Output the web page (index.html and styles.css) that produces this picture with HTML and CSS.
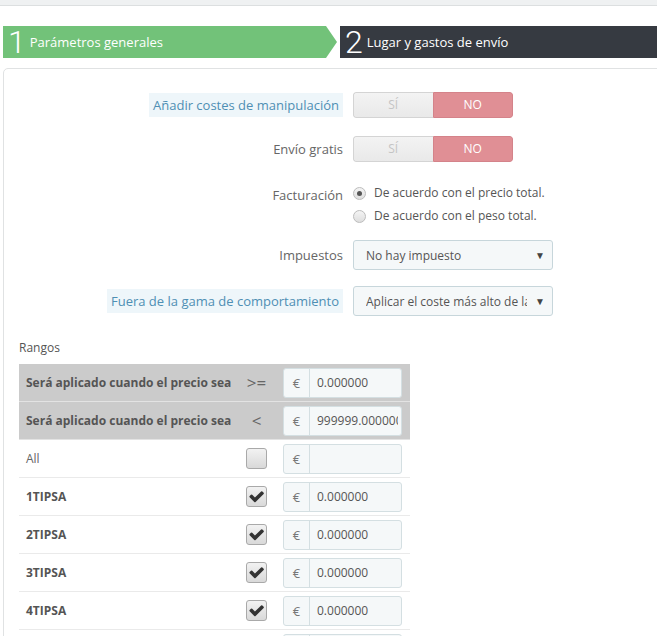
FILE: index.html
```html
<!DOCTYPE html>
<html lang="es">
<head>
  <meta charset="UTF-8">
  <title>Transportista - Asistente</title>
  <link rel="stylesheet" href="styles.css">
</head>
<body>
  <div class="topbar"></div>

  <!-- Wizard steps -->
  <div class="steps">
    <div class="step step-done"><span class="step-num">1</span>Parámetros generales</div>
    <div class="step step-current"><span class="step-num">2</span>Lugar y gastos de envío</div>
  </div>

  <div class="card">
    <div class="form-row first">
      <div class="label-col"><span class="label hint">Añadir costes de manipulación</span></div>
      <div class="switch">
        <span class="switch-opt">SÍ</span>
        <span class="switch-opt active">NO</span>
      </div>
    </div>

    <div class="form-row gap-lg">
      <div class="label-col"><span class="label">Envío gratis</span></div>
      <div class="switch">
        <span class="switch-opt">SÍ</span>
        <span class="switch-opt active">NO</span>
      </div>
    </div>

    <div class="form-row radio-row">
      <div class="label-col"><span class="label">Facturación</span></div>
      <div class="radios">
        <label class="radio"><span class="radio-dot checked"></span>De acuerdo con el precio total.</label>
        <label class="radio"><span class="radio-dot"></span>De acuerdo con el peso total.</label>
      </div>
    </div>

    <div class="form-row gap-md">
      <div class="label-col"><span class="label">Impuestos</span></div>
      <div class="select"><span class="select-text">No hay impuesto</span><span class="caret">&#9660;</span></div>
    </div>

    <div class="form-row">
      <div class="label-col"><span class="label hint">Fuera de la gama de comportamiento</span></div>
      <div class="select"><span class="select-text">Aplicar el coste más alto de la gama definida</span><span class="caret">&#9660;</span></div>
    </div>

    <!-- Ranges -->
    <div class="ranges">
      <div class="ranges-title">Rangos</div>
      <div class="range-table">
        <div class="range-row head">
          <div class="range-label">Será aplicado cuando el precio sea</div>
          <div class="range-mid op">&gt;=</div>
          <div class="input-group"><span class="addon">€</span><span class="input">0.000000</span></div>
        </div>
        <div class="range-row head">
          <div class="range-label">Será aplicado cuando el precio sea</div>
          <div class="range-mid op">&lt;</div>
          <div class="input-group"><span class="addon">€</span><span class="input">999999.000000</span></div>
        </div>
        <div class="range-row">
          <div class="range-label plain">All</div>
          <div class="range-mid"><span class="checkbox"></span></div>
          <div class="input-group"><span class="addon">€</span><span class="input"></span></div>
        </div>
        <div class="range-row">
          <div class="range-label">1TIPSA</div>
          <div class="range-mid"><span class="checkbox"><svg class="tick" viewBox="80 390 1600 1140"><path d="M1671 566q0 40-28 68l-724 724-136 136q-28 28-68 28t-68-28l-136-136-362-362q-28-28-28-68t28-68l136-136q28-28 68-28t68 28l294 295 656-657q28-28 68-28t68 28l136 136q28 28 28 68z"/></svg></span></div>
          <div class="input-group"><span class="addon">€</span><span class="input">0.000000</span></div>
        </div>
        <div class="range-row">
          <div class="range-label">2TIPSA</div>
          <div class="range-mid"><span class="checkbox"><svg class="tick" viewBox="80 390 1600 1140"><path d="M1671 566q0 40-28 68l-724 724-136 136q-28 28-68 28t-68-28l-136-136-362-362q-28-28-28-68t28-68l136-136q28-28 68-28t68 28l294 295 656-657q28-28 68-28t68 28l136 136q28 28 28 68z"/></svg></span></div>
          <div class="input-group"><span class="addon">€</span><span class="input">0.000000</span></div>
        </div>
        <div class="range-row">
          <div class="range-label">3TIPSA</div>
          <div class="range-mid"><span class="checkbox"><svg class="tick" viewBox="80 390 1600 1140"><path d="M1671 566q0 40-28 68l-724 724-136 136q-28 28-68 28t-68-28l-136-136-362-362q-28-28-28-68t28-68l136-136q28-28 68-28t68 28l294 295 656-657q28-28 68-28t68 28l136 136q28 28 28 68z"/></svg></span></div>
          <div class="input-group"><span class="addon">€</span><span class="input">0.000000</span></div>
        </div>
        <div class="range-row">
          <div class="range-label">4TIPSA</div>
          <div class="range-mid"><span class="checkbox"><svg class="tick" viewBox="80 390 1600 1140"><path d="M1671 566q0 40-28 68l-724 724-136 136q-28 28-68 28t-68-28l-136-136-362-362q-28-28-28-68t28-68l136-136q28-28 68-28t68 28l294 295 656-657q28-28 68-28t68 28l136 136q28 28 28 68z"/></svg></span></div>
          <div class="input-group"><span class="addon">€</span><span class="input">0.000000</span></div>
        </div>
        <div class="range-row">
          <div class="range-label">5TIPSA</div>
          <div class="range-mid"><span class="checkbox"><svg class="tick" viewBox="80 390 1600 1140"><path d="M1671 566q0 40-28 68l-724 724-136 136q-28 28-68 28t-68-28l-136-136-362-362q-28-28-28-68t28-68l136-136q28-28 68-28t68 28l294 295 656-657q28-28 68-28t68 28l136 136q28 28 28 68z"/></svg></span></div>
          <div class="input-group"><span class="addon">€</span><span class="input">0.000000</span></div>
        </div>
      </div>
    </div>
  </div>
</body>
</html>
```

FILE: styles.css
```css
html, body {
  overflow: hidden;
}
body {
  margin: 0;
  font-family: "Open Sans", Arial, sans-serif;
  font-size: 13px;
  color: #666;
  background: #fff;
}
.topbar {
  height: 5px;
  background: #eff1f2;
  border-bottom: 1px solid #dcdfe0;
}

/* wizard steps */
.steps {
  display: flex;
  margin: 20px 0 0 3px;
  height: 32px;
}
.step {
  display: flex;
  align-items: center;
  color: #fff;
  font-size: 13px;
  white-space: nowrap;
}
.step-num {
  font-family: Roboto, "Open Sans", sans-serif;
  font-weight: 300;
  font-size: 32px;
  line-height: 32px;
  margin-right: 4px;
}
.step-done {
  width: 334px;
  padding-left: 5px;
  box-sizing: border-box;
  background: #72c279;
  clip-path: polygon(0 0, calc(100% - 11px) 0, 100% 50%, calc(100% - 11px) 100%, 0 100%);
}
.step-current {
  flex: 1;
  margin-left: 3px;
  padding-left: 5px;
  background: #363a41;
}

/* card */
.card {
  margin: 10px -20px 0 3px;
  border: 1px solid #e0e2e3;
  border-radius: 5px;
  padding-top: 23px;
  height: 700px;
}
.form-row {
  display: grid;
  grid-template-columns: 339px auto;
  column-gap: 10px;
  align-items: center;
  justify-content: start;
  margin-bottom: 16px;
}
.form-row.first {
  margin-bottom: 18px;
}
.form-row.gap-lg {
  margin-bottom: 22px;
}
.form-row.gap-md {
  margin-bottom: 16px;
}
.form-row.radio-row {
  align-items: start;
  margin-bottom: 15px;
}
.label-col {
  text-align: right;
}
.label {
  display: inline-block;
  line-height: 24px;
  color: #666;
  vertical-align: middle;
}
.label.hint {
  background: #eef6fa;
  color: #4f8fb4;
  padding: 0 4px;
}
.radio-row .label {
  line-height: 16px;
}

/* yes/no switch */
.switch {
  display: flex;
  width: 160px;
  height: 26px;
  border-radius: 3px;
  overflow: hidden;
}
.switch-opt {
  flex: 1;
  text-align: center;
  line-height: 24px;
  font-size: 12px;
  color: #c4c4c4;
  background: linear-gradient(#f3f3f3, #e9e9e9);
  border: 1px solid #d4d4d4;
  border-right: none;
  border-radius: 3px 0 0 3px;
}
.switch-opt.active {
  color: #fff;
  background: #e08f95;
  border: 1px solid #d4838a;
  border-radius: 0 3px 3px 0;
}

/* radios */
.radios {
  display: flex;
  flex-direction: column;
  gap: 5px;
}
.radio {
  display: flex;
  align-items: center;
  line-height: 18px;
  font-size: 12px;
  color: #555;
  white-space: nowrap;
}
.radio-dot {
  width: 11px;
  height: 11px;
  border: 1px solid #bcbcbc;
  border-radius: 50%;
  background: linear-gradient(#f4f4f4, #dedede);
  margin-right: 8px;
  position: relative;
}
.radio-dot.checked::after {
  content: "";
  position: absolute;
  left: 3px;
  top: 3px;
  width: 5px;
  height: 5px;
  border-radius: 50%;
  background: #555;
}

/* select */
.select {
  display: flex;
  align-items: center;
  width: 200px;
  height: 30px;
  box-sizing: border-box;
  border: 1px solid #c7d6db;
  border-radius: 3px;
  background: #f5f8f9;
  padding: 0 7px 0 12px;
}
.select-text {
  flex: 1;
  overflow: hidden;
  white-space: nowrap;
  color: #555;
  font-size: 12px;
}
.caret {
  font-size: 10px;
  color: #444;
  margin-left: 8px;
}

/* ranges */
.ranges {
  margin: 24px 0 0 15px;
}
.ranges-title {
  font-size: 12px;
  color: #555;
  line-height: 16px;
  margin-bottom: 8px;
}
.range-table {
  width: 391px;
}
.range-row {
  display: grid;
  grid-template-columns: 221px 33px 129px;
  align-items: center;
  height: 37px;
  border-bottom: 1px solid #eaeaea;
  padding-right: 8px;
}
.range-row.head {
  background: #cbcbcb;
  border-bottom-color: #e3e3e3;
}
.range-label {
  padding-left: 7px;
  font-size: 12px;
  font-weight: bold;
  color: #555;
  white-space: nowrap;
}
.range-label.plain {
  font-weight: normal;
  color: #666;
}
.range-mid {
  display: flex;
  justify-content: center;
}
.range-mid.op {
  font-size: 17px;
  color: #666;
}
.checkbox {
  display: flex;
  align-items: center;
  justify-content: center;
  width: 21px;
  height: 21px;
  box-sizing: border-box;
  border: 1px solid #a9a9a9;
  border-radius: 3px;
  background: linear-gradient(#f2f2f2, #d9d9d9);
}
.tick {
  width: 15px;
  height: 12px;
  fill: #333;
}
.input-group {
  display: flex;
  height: 30px;
  margin-left: 10px;
  box-sizing: border-box;
  border: 1px solid #d4dfe2;
  border-radius: 3px;
  background: #f5f8f9;
  overflow: hidden;
}
.addon {
  width: 25px;
  flex: none;
  text-align: center;
  line-height: 28px;
  color: #777;
  border-right: 1px solid #d4dfe2;
}
.input {
  flex: 1;
  margin-right: 3px;
  padding-left: 7px;
  line-height: 28px;
  font-size: 12px;
  color: #555;
  white-space: nowrap;
  overflow: hidden;
}
```
